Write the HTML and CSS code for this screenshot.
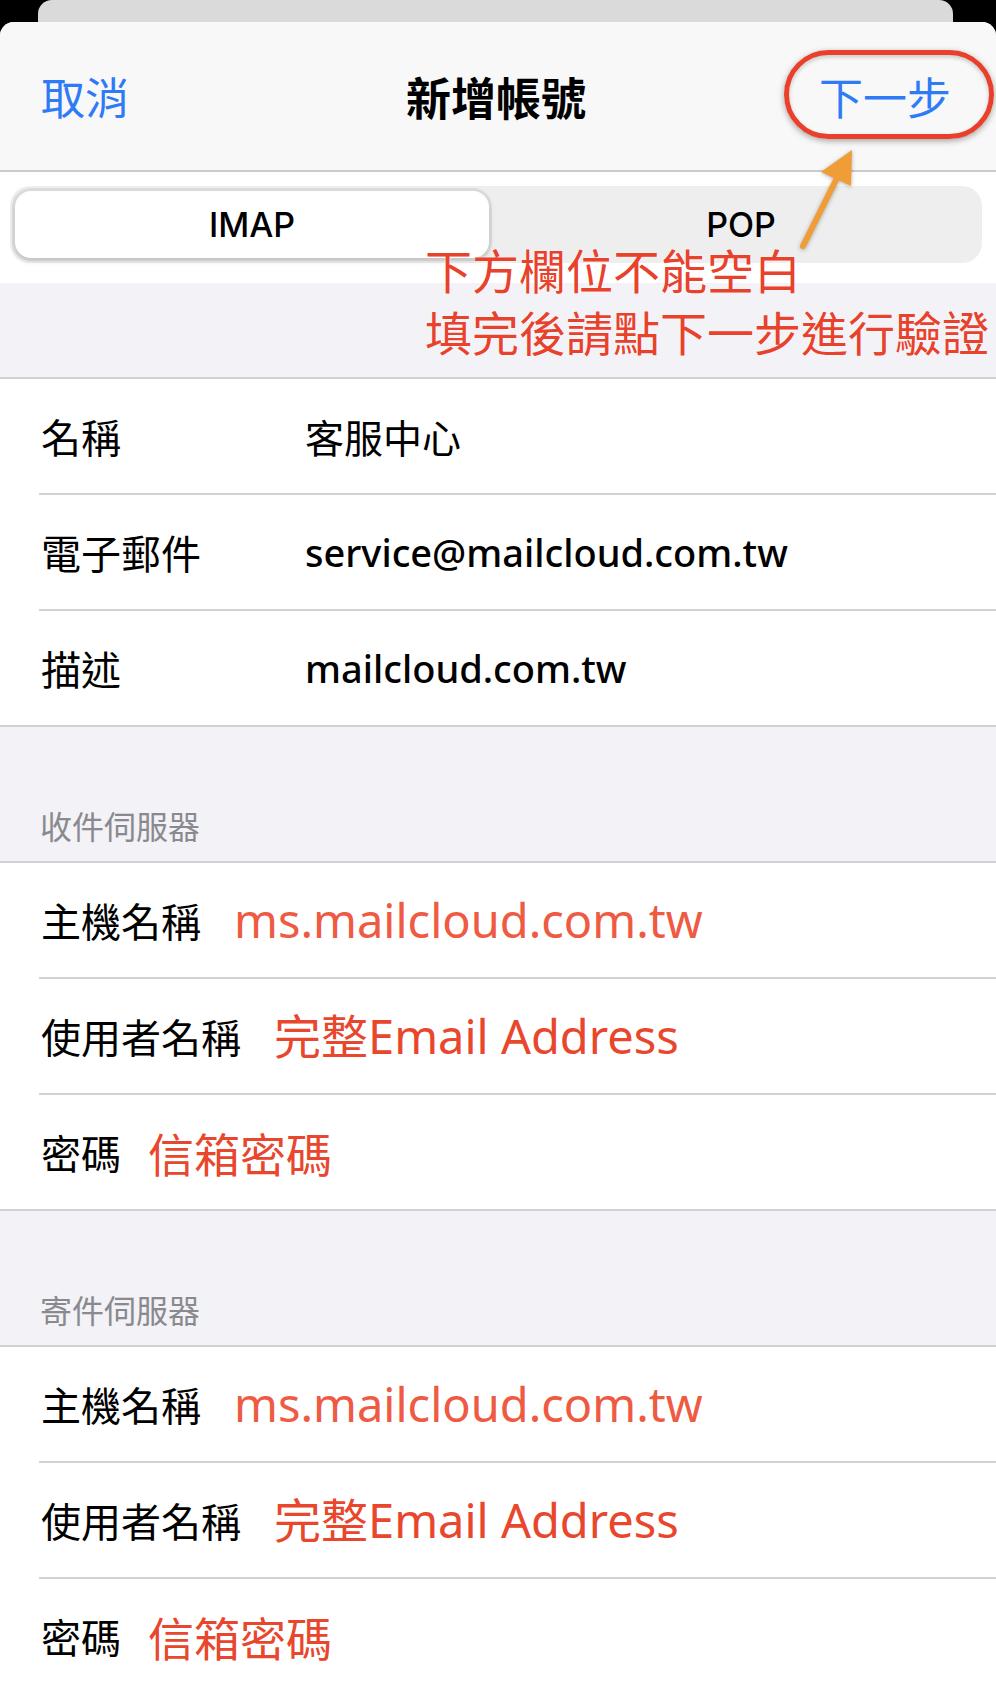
FILE: index.html
```html
<!DOCTYPE html>
<html lang="zh-Hant">
<head>
<meta charset="utf-8">
<title>新增帳號</title>
<link rel="stylesheet" href="styles.css">
</head>
<body>
<div class="page">
  <div class="backcard"></div>
  <div class="sheet">
    <header class="nav">
      <span class="nav-btn nav-left">取消</span>
      <h1 class="nav-title">新增帳號</h1>
      <span class="nav-btn nav-right">下一步</span>
    </header>
    <div class="seg-wrap">
      <div class="seg">
        <div class="seg-item active">IMAP</div>
        <div class="seg-item second">POP</div>
      </div>
    </div>
    <div class="spacer"></div>
    <section class="group">
      <div class="row"><span class="label fixed">名稱</span><span class="value">客服中心</span></div>
      <div class="row"><span class="label fixed">電子郵件</span><span class="value latin">service@mailcloud.com.tw</span></div>
      <div class="row"><span class="label fixed">描述</span><span class="value latin">mailcloud.com.tw</span></div>
    </section>
    <div class="group-header">收件伺服器</div>
    <section class="group">
      <div class="row"><span class="label">主機名稱</span><span class="hint host">ms.mailcloud.com.tw</span></div>
      <div class="row"><span class="label">使用者名稱</span><span class="hint">完整Email Address</span></div>
      <div class="row"><span class="label">密碼</span><span class="hint pw">信箱密碼</span></div>
    </section>
    <div class="group-header">寄件伺服器</div>
    <section class="group last">
      <div class="row"><span class="label">主機名稱</span><span class="hint host">ms.mailcloud.com.tw</span></div>
      <div class="row"><span class="label">使用者名稱</span><span class="hint">完整Email Address</span></div>
      <div class="row"><span class="label">密碼</span><span class="hint pw">信箱密碼</span></div>
    </section>
  </div>

  <div class="ring"></div>
  <svg class="arrow" width="70" height="120" viewBox="0 0 70 120">
    <line x1="8" y1="106" x2="42" y2="38" stroke="#f09d38" stroke-width="6" stroke-linecap="round"/>
    <polygon points="57,10 26,32 56,46" fill="#f09d38"/>
  </svg>
  <div class="note">下方欄位不能空白<br>填完後請點下一步進行驗證</div>
</div>
</body>
</html>
```

FILE: styles.css
```css
html, body {
  margin: 0;
  padding: 0;
  background: #fff;
}

body {
  font-family: "Noto Sans", "Noto Sans CJK TC", sans-serif;
  color: #000;
}

.page {
  position: relative;
  width: 996px;
  height: 1700px;
  overflow: hidden;
  background: #000;
}

.backcard {
  height: 22px;
  margin: 0 43px 0 38px;
  background: #dadada;
  border-radius: 14px 14px 0 0;
}

.sheet {
  background: #fff;
  border-radius: 14px 14px 0 0;
  height: 1678px;
  overflow: hidden;
}

/* Navigation bar */
.nav {
  height: 148px;
  background: #f8f8f9;
  border-bottom: 2px solid #cbcbce;
  display: grid;
  grid-template-columns: 1fr auto 1fr;
  align-items: center;
  padding: 0 45px 0 41px;
}

.nav-btn {
  font-family: "Noto Sans CJK TC", sans-serif;
  font-size: 44px;
  color: #2f7bf5;
  line-height: 1;
}

.nav-left { justify-self: start; }
.nav-right { justify-self: end; }

.nav-title {
  margin: 0;
  font-family: "Noto Sans CJK TC", sans-serif;
  font-size: 45px;
  font-weight: 700;
  line-height: 1;
}

/* Segmented control */
.seg-wrap {
  height: 111px;
  background: #fff;
  padding: 14px 14px 0 10px;
  box-sizing: border-box;
}

.seg {
  height: 77px;
  background: #eeeeef;
  border-radius: 20px;
  padding: 5px;
  box-sizing: border-box;
  display: grid;
  grid-template-columns: 474px 1fr;
}

.seg-item {
  display: flex;
  align-items: center;
  justify-content: center;
  font-family: "Inter", "Noto Sans", sans-serif;
  font-size: 34px;
  font-weight: 500;
  color: #000;
  border-radius: 16px;
}

.seg-item.second {
  padding-left: 16px;
}

.seg-item.active {
  background: #fff;
  box-shadow: 0 0 0 3px rgba(0, 0, 0, 0.07), 0 3px 6px rgba(0, 0, 0, 0.12);
}

.spacer {
  height: 94px;
  background: #f2f2f7;
}

/* Groups */
.group {
  background: #fff;
  border-top: 2px solid #d1d1d5;
  border-bottom: 2px solid #d1d1d5;
}

.group.last {
  border-bottom: none;
}

.row {
  height: 114px;
  margin-left: 39px;
  padding-left: 2px;
  display: flex;
  align-items: center;
  gap: 33px;
}

.row + .row {
  border-top: 2px solid #d1d1d5;
}

.label {
  font-family: "Noto Sans CJK TC", sans-serif;
  font-size: 40px;
  line-height: 1;
  color: #000;
  white-space: nowrap;
}

.label.fixed {
  width: 231px;
}

.value {
  font-family: "Noto Sans CJK TC", sans-serif;
  font-size: 39px;
  line-height: 1;
  color: #000;
  white-space: nowrap;
}

.value.latin {
  font-family: "Noto Sans", sans-serif;
  font-size: 38px;
  font-weight: 500;
}

.hint {
  font-family: "Noto Sans", "Noto Sans CJK TC", sans-serif;
  font-size: 47px;
  line-height: 1;
  color: #e8472d;
  white-space: nowrap;
}

.hint.host {
  color: #ee5a42;
}

.hint.pw {
  font-family: "Noto Sans CJK TC", sans-serif;
  font-size: 46px;
  margin-left: -6px;
}

.group-header {
  height: 134px;
  box-sizing: border-box;
  background: #f2f2f7;
  display: flex;
  align-items: flex-end;
  padding: 0 0 20px 40px;
  font-family: "Noto Sans CJK TC", sans-serif;
  font-size: 32px;
  line-height: 1;
  color: #8a8a8e;
}

/* Annotations (overlays) */
.ring {
  position: absolute;
  left: 784px;
  top: 50px;
  width: 210px;
  height: 89px;
  box-sizing: border-box;
  border: 5px solid #e8402a;
  border-radius: 45px;
  box-shadow: 0 2px 6px rgba(0, 0, 0, 0.35), inset 0 2px 4px rgba(0, 0, 0, 0.2);
}

.arrow {
  position: absolute;
  left: 795px;
  top: 140px;
  filter: drop-shadow(0 1px 2px rgba(0, 0, 0, 0.3));
}

.note {
  position: absolute;
  left: 425px;
  top: 238px;
  font-family: "Noto Sans CJK TC", sans-serif;
  font-size: 47px;
  line-height: 62px;
  color: #e8412c;
  white-space: nowrap;
  text-shadow: 0 0 2px #fff;
}
```
